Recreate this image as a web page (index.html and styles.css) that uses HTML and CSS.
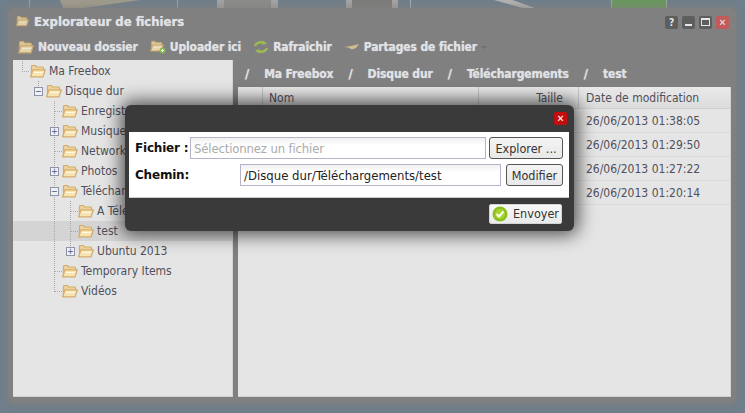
FILE: index.html
```html
<!DOCTYPE html>
<html lang="fr">
<head>
<meta charset="utf-8">
<title>Explorateur de fichiers</title>
<link rel="stylesheet" href="styles.css">
</head>
<body>
<svg width="0" height="0" class="defs">
  <symbol id="folder" viewBox="0 0 16 14">
    <path d="M1.500 12.500V2.500q0-1 1-1h3l1 1.500h6q1 0 1 1v1.500" fill="#ecd59c" stroke="#d4ab6e" stroke-width="1.200"/>
    <path d="M.7 12.800 3 5.800h12.300l-2.300 7z" fill="#f8e4ae" stroke="#d4ab6e" stroke-width="1.200"/>
    <path d="M4 8.500h9" stroke="#fff" stroke-opacity=".7"/>
  </symbol>
</svg>
<div class="desktop">
  <div class="strip">
    <span class="tile t1"></span><span class="tile t2"></span><span class="tile t3"></span><span class="tile t4"></span><span class="tile t5"></span><span class="tile t6"></span><span class="tile t7"></span>
  </div>
  <main class="window">
    <header class="titlebar">
      <svg class="ti-icon"><use href="#folder"/></svg>
      <h1 class="title">Explorateur de fichiers</h1>
      <div class="winbtns">
        <span class="wb">?</span>
        <span class="wb"><i class="min"></i></span>
        <span class="wb"><i class="max"></i></span>
        <span class="wb close">✕</span>
      </div>
    </header>
    <nav class="toolbar">
      <span class="tool"><svg class="tool-ic" viewBox="0 0 16 14"><use href="#folder" width="16" height="14"/></svg>Nouveau dossier</span>
      <span class="tool"><svg class="tool-ic" viewBox="0 0 16 14"><use href="#folder" width="14" height="12"/><circle cx="12.500" cy="10.500" r="3" fill="#8bc34a"/><path d="M11 10.500h3M12.500 9v3" stroke="#fff"/></svg>Uploader ici</span>
      <span class="tool"><svg class="tool-ic" viewBox="0 0 16 14"><path d="M2 6a6 4.500 0 0 1 10-2.500" fill="none" stroke="#a3c44c" stroke-width="2.400"/><path d="M10 .500l4 3.200-5 1.100z" fill="#a3c44c"/><path d="M14 8a6 4.500 0 0 1-10 2.500" fill="none" stroke="#a3c44c" stroke-width="2.400"/><path d="M6 13.500l-4-3.200 5-1.100z" fill="#a3c44c"/></svg>Rafraîchir</span>
      <span class="tool"><svg class="tool-ic" viewBox="0 0 16 14"><path d="M0 7l7-1 8-2-3 4-4 1.500-4-2z" fill="#dcc890"/></svg>Partages de fichier<i class="caret"></i></span>
    </nav>
    <div class="panes">
      <aside class="tree">
        <div class="node l0 dot"><svg class="fld"><use href="#folder"/></svg>Ma Freebox</div>
        <div class="node l1"><span class="pm">−</span><svg class="fld"><use href="#folder"/></svg>Disque dur</div>
        <div class="node l2 dot"><svg class="fld"><use href="#folder"/></svg>Enregistrements</div>
        <div class="node l2"><span class="pm">+</span><svg class="fld"><use href="#folder"/></svg>Musiques</div>
        <div class="node l2 dot"><svg class="fld"><use href="#folder"/></svg>Network</div>
        <div class="node l2"><span class="pm">+</span><svg class="fld"><use href="#folder"/></svg>Photos</div>
        <div class="node l2"><span class="pm">−</span><svg class="fld"><use href="#folder"/></svg>Téléchargements</div>
        <div class="node l3 dot"><svg class="fld"><use href="#folder"/></svg>A Télécharger</div>
        <div class="node l3 dot sel"><svg class="fld"><use href="#folder"/></svg>test</div>
        <div class="node l3 last"><span class="pm">+</span><svg class="fld"><use href="#folder"/></svg>Ubuntu 2013</div>
        <div class="node l2 dot"><svg class="fld"><use href="#folder"/></svg>Temporary Items</div>
        <div class="node l2 dot last"><svg class="fld"><use href="#folder"/></svg>Vidéos</div>
      </aside>
      <section class="content">
        <div class="crumbs"><span class="sl">/</span><span>Ma Freebox</span><span class="sl">/</span><span>Disque dur</span><span class="sl">/</span><span>Téléchargements</span><span class="sl">/</span><span>test</span></div>
        <div class="list">
          <div class="row head"><span class="c0"></span><span class="c1">Nom</span><span class="c2">Taille</span><span class="c3">Date de modification</span></div>
          <div class="row"><span class="c0"></span><span class="c1"></span><span class="c2"></span><span class="c3">26/06/2013 01:38:05</span></div>
          <div class="row"><span class="c0"></span><span class="c1"></span><span class="c2"></span><span class="c3">26/06/2013 01:29:50</span></div>
          <div class="row"><span class="c0"></span><span class="c1"></span><span class="c2"></span><span class="c3">26/06/2013 01:27:22</span></div>
          <div class="row"><span class="c0"></span><span class="c1"></span><span class="c2"></span><span class="c3">26/06/2013 01:20:14</span></div>
        </div>
      </section>
    </div>
  </main>
  <div class="dialog">
    <div class="dlg-top"><span class="dlg-close">✕</span></div>
    <form class="dlg-body">
      <div class="frow">
        <label class="lbl">Fichier :</label>
        <div class="inp wide ph">Sélectionnez un fichier</div>
        <button type="button" class="btn b-exp">Explorer ...</button>
      </div>
      <div class="frow">
        <label class="lbl lbl2">Chemin:</label>
        <div class="inp path">/Disque dur/Téléchargements/test</div>
        <button type="button" class="btn b-mod">Modifier</button>
      </div>
    </form>
    <div class="dlg-foot">
      <button type="button" class="send"><svg class="ok" viewBox="0 0 16 16"><circle cx="8" cy="8" r="7.500" fill="#8cbf1f"/><circle cx="8" cy="8" r="5" fill="#a5d62f"/><path d="M4.500 8l2.500 2.500 4.500-5" fill="none" stroke="#fff" stroke-width="2"/></svg>Envoyer</button>
    </div>
  </div>
</div>
</body>
</html>
```
FILE: styles.css
```css
* { box-sizing: border-box; }
html, body { margin: 0; padding: 0; }
body { width: 745px; height: 413px; overflow: hidden; font-family: "DejaVu Sans", sans-serif; font-stretch: condensed; }
.defs { position: absolute; }
.desktop { position: relative; width: 745px; height: 413px; background: #6f7f8b; overflow: hidden; padding: 8px; }

.strip { position: absolute; left: 0; top: 0; right: 0; height: 8px; display: flex; }
.tile { display: block; height: 8px; flex: none; }
.t1 { width: 30px; border-right: 1px solid #98a2a9; }
.t2 { width: 80px; margin-left: 30px; background: #a09c8c; clip-path: polygon(0 0, 100% 0, 30% 100%, 4% 100%); }
.t3 { width: 39px; margin-left: -1px; border-right: 1px solid #98a2a9; }
.t4 { width: 61px; margin-left: 39px; background: linear-gradient(90deg, #a4a4a4 0 12%, #8c8c8c 12% 88%, #a4a4a4 88%); }
.t5 { width: 65px; margin-left: 68px; background: linear-gradient(90deg, #a4a4a4 0 10%, #7c7c7c 10% 72%, #a4a4a4 72% 82%, #6f7f8b 82%); border-right: 1px solid #a8b0b6; }
.t6 { width: 41px; margin-left: 83px; background: #b4b4b4; clip-path: polygon(0 0, 45% 0, 100% 100%, 70% 100%); }
.t7 { width: 56px; margin-left: 76px; background: #68985e; border: solid #a4a89e; border-width: 0 1px; }

.window { position: relative; height: 395px; width: 728px; background: #808080; border-radius: 6px; padding: 0 5px 6px; display: flex; flex-direction: column; box-shadow: 0 0 7px 2px rgba(130,128,124,.65); }
.titlebar { display: flex; align-items: center; height: 26px; padding-left: 3px; }
.ti-icon { width: 13px; height: 12px; margin-right: 5px; opacity: .8; }
.title { margin: 0; font-size: 13px; font-weight: bold; color: #e0e2e6; flex: 1; text-shadow: 0 0 1px rgba(224,226,230,.7); }
.winbtns { display: flex; gap: 4px; margin: 2px 2px 0 0; }
.wb { width: 13px; height: 13px; border-radius: 2px; background: #5e5e5e; color: #e6e6e6; font-size: 10px; font-weight: bold; display: flex; align-items: center; justify-content: center; }
.wb.close { background: #c25a5a; }
.min { width: 7px; height: 2px; background: #e6e6e6; margin-top: 6px; }
.max { width: 9px; height: 8px; border: 1px solid #e6e6e6; border-top-width: 2px; }

.toolbar { display: flex; align-items: center; height: 26px; gap: 12px; padding-left: 5px; }
.tool { display: flex; align-items: center; font-size: 12px; font-weight: bold; letter-spacing: -.12px; color: #e0e2e6; text-shadow: 0 0 1px rgba(224,226,230,.7); }
.tool-ic { width: 16px; height: 14px; margin-right: 4px; opacity: .85; }
.caret { width: 0; height: 0; border: 3px solid transparent; border-top-color: #6e6e6e; margin: 3px 0 0 4px; }

.panes { flex: 1; display: flex; gap: 5px; min-height: 0; }
.tree { width: 220px; background: #e5e5e5; padding-top: 1px; font-size: 12px; color: #50505c; border-bottom: 1px solid #cfcfcf; border-right: 1px solid #d4d4d4; }
.node { height: 20px; display: flex; align-items: center; white-space: nowrap; overflow: hidden;
  --v: repeating-linear-gradient(to bottom, #a8a8a8 0 1px, transparent 1px 2px);
  --h: repeating-linear-gradient(to right, #a8a8a8 0 1px, transparent 1px 2px);
  background-repeat: no-repeat; }
.l0 { padding-left: 17px; background-image: var(--v), var(--h); background-size: 1px 10px, 8px 1px; background-position: 9px 0, 9px 10px; }
.l1 { padding-left: 21px; background-image: var(--v); background-size: 1px 5px; background-position: 25px 0; }
.l2 { padding-left: 37px; background-image: var(--v); background-size: 1px 100%; background-position: 41px 0; }
.l3 { padding-left: 53px; background-image: var(--v), var(--v); background-size: 1px 100%, 1px 100%; background-position: 41px 0, 57px 0; }
.l2.dot { padding-left: 49px; background-image: var(--v), var(--h); background-size: 1px 100%, 8px 1px; background-position: 41px 0, 42px 10px; }
.l3.dot { padding-left: 65px; background-image: var(--v), var(--v), var(--h); background-size: 1px 100%, 1px 100%, 8px 1px; background-position: 41px 0, 57px 0, 58px 10px; }
.l2.last { background-size: 1px 11px, 8px 1px; }
.l3.last { background-size: 1px 100%, 1px 6px; }
.sel { background-color: #d4d4d4; }
.pm { width: 9px; height: 9px; margin-right: 3px; border: 1px solid #8d94a6; background: #eef0f4; color: #505a70; font-size: 9px; line-height: 7px; text-align: center; flex: none; }
.fld { width: 16px; height: 14px; margin-right: 3px; flex: none; }

.content { flex: 1; min-width: 0; display: flex; flex-direction: column; }
.crumbs { height: 27px; display: flex; align-items: center; gap: 15px; padding: 0 0 0 7px; font-size: 12px; font-weight: bold; letter-spacing: -.12px; color: #e0e2e6; flex: none; text-shadow: 0 0 1px rgba(224,226,230,.7); }
.sl { font-size: 13px; }
.list { flex: 1; background: #e5e5e5; font-size: 12px; color: #50505c; border-bottom: 1px solid #cfcfcf; border-right: 1px solid #d4d4d4; }
.row { display: flex; height: 24px; border-bottom: 1px solid #dadada; padding-top: 1px; }
.row span { display: flex; align-items: center; }
.head { height: 22px; padding-top: 0; background: linear-gradient(#e9e9e9, #dcdcdc); border-bottom-color: #d0d0d0; }
.head span { border-right: 1px solid #c6c6c6; }
.c0 { width: 25px; }
.c1 { width: 216px; padding-left: 6px; }
.c2 { width: 100px; justify-content: flex-end; padding-right: 15px; }
.c3 { flex: 1; padding-left: 7px; }
.head .c3 { border-right: 0; }

.dialog { position: absolute; left: 125px; top: 105px; width: 449px; height: 126px; background: #3a3a3a; border-radius: 6px; box-shadow: 0 0 18px 4px rgba(0,0,0,.65); display: flex; flex-direction: column; }
.dlg-top { height: 27px; display: flex; justify-content: flex-end; align-items: center; padding-right: 7px; flex: none; }
.dlg-close { width: 13px; height: 13px; border-radius: 2px; background: #c40d0d; color: #fff; font-size: 10px; font-weight: bold; display: flex; align-items: center; justify-content: center; }
.dlg-body { background: #fff; margin: 0 5px 0 4px; height: 66px; padding: 5px 6px 0 6px; border-bottom: 1px solid #ccc; display: flex; flex-direction: column; gap: 5px; flex: none; }
.frow { display: flex; align-items: center; height: 22px; }
.lbl { font-size: 12px; font-weight: bold; font-stretch: normal; letter-spacing: -.2px; color: #111; white-space: nowrap; width: 55px; flex: none; }
.lbl2 { width: 105px; }
.inp { height: 22px; border: 1px solid #b4b4cc; background: linear-gradient(#f0f0f0, #fff 7px); font-size: 13px; color: #222; padding: 0 3px; display: flex; align-items: center; flex: none; white-space: nowrap; }
.wide { width: 296px; }
.ph { color: #aaa; letter-spacing: -.15px; }
.path { width: 261px; }
.btn { height: 22px; border: 1px solid #555; border-radius: 3px; background: linear-gradient(#f4f4f4, #e8e8e8); font: condensed 12.5px "DejaVu Sans", sans-serif; color: #333; padding: 0; flex: none; }
.b-exp { width: 74px; margin-left: 3px; }
.b-mod { width: 57px; margin-left: 5px; }
.dlg-foot { flex: 1; display: flex; justify-content: flex-end; align-items: center; padding: 0 12px 2px 0; }
.send { display: flex; align-items: center; height: 20px; width: 73px; border: 1px solid #d4d4d4; border-radius: 2px; background: linear-gradient(#f8f8f8, #eaeaea); font: condensed 12.5px "DejaVu Sans", sans-serif; color: #333; padding: 0 0 0 2px; }
.ok { width: 16px; height: 16px; margin-right: 5px; }
```
